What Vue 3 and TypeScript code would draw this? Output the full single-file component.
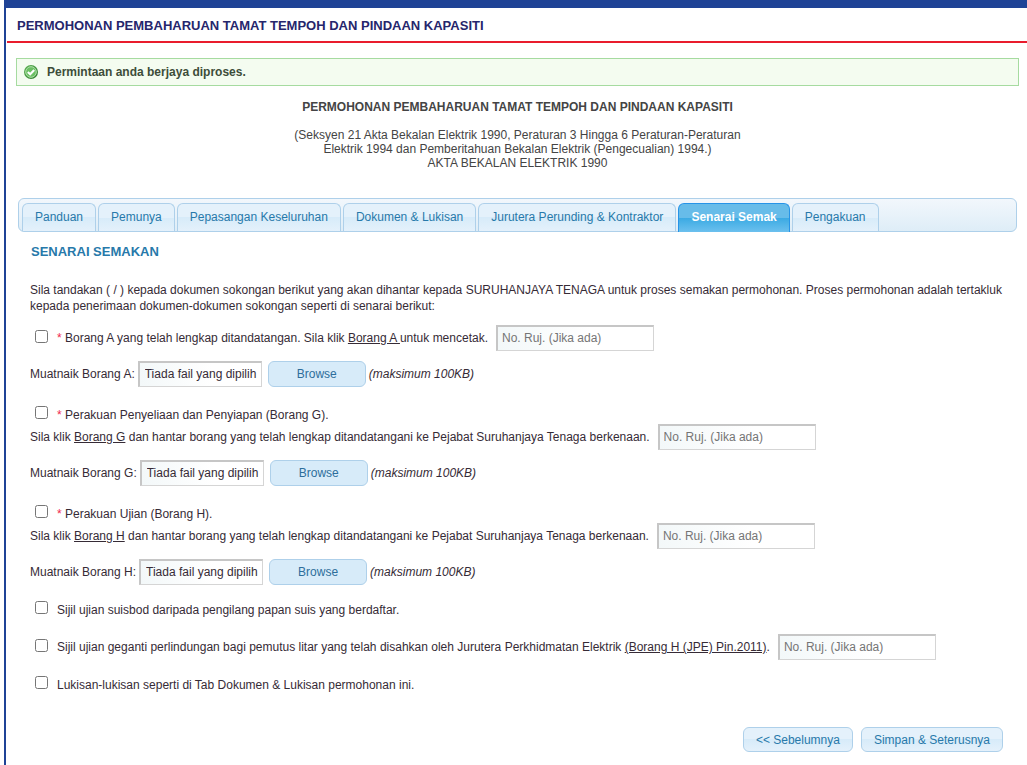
<script setup lang="ts">
import { ref } from 'vue'

const title = 'PERMOHONAN PEMBAHARUAN TAMAT TEMPOH DAN PINDAAN KAPASITI'

const tabs: string[] = [
  'Panduan',
  'Pemunya',
  'Pepasangan Keseluruhan',
  'Dokumen & Lukisan',
  'Jurutera Perunding & Kontraktor',
  'Senarai Semak',
  'Pengakuan',
]
const activeTab = ref('Senarai Semak')

interface FormUpload {
  code: string
  name: string
}
const uploads: FormUpload[] = [
  { code: 'G', name: 'Perakuan Penyeliaan dan Penyiapan (Borang G).' },
  { code: 'H', name: 'Perakuan Ujian (Borang H).' },
]
</script>

<template>
  <div class="page">
    <h1 class="page-title">{{ title }}</h1>

    <div class="alert" role="status">
      <svg class="alert-icon" viewBox="0 0 14 14" aria-hidden="true">
        <defs>
          <linearGradient id="okFill" x1="0" y1="0" x2="1" y2="1">
            <stop offset="0" stop-color="#5cb355" />
            <stop offset="1" stop-color="#2f7d2c" />
          </linearGradient>
        </defs>
        <circle cx="7" cy="7" r="7" fill="url(#okFill)" />
        <circle cx="7" cy="7" r="5.3" fill="#6cc064" stroke="#b4e2ad" stroke-width="1" />
        <path d="M3.8 7 6.2 9.3 10.2 5" fill="none" stroke="#fff" stroke-width="2.1" />
      </svg>
      <span>Permintaan anda berjaya diproses.</span>
    </div>

    <div class="intro">
      <h2>{{ title }}</h2>
      <p>
        (Seksyen 21 Akta Bekalan Elektrik 1990, Peraturan 3 Hingga 6 Peraturan-Peraturan<br />
        Elektrik 1994 dan Pemberitahuan Bekalan Elektrik (Pengecualian) 1994.)<br />
        AKTA BEKALAN ELEKTRIK 1990
      </p>
    </div>

    <div class="tabs" role="tablist">
      <button
        v-for="tab in tabs"
        :key="tab"
        type="button"
        role="tab"
        class="tab"
        :class="{ active: tab === activeTab }"
        :aria-selected="tab === activeTab"
        @click="activeTab = tab"
      >{{ tab }}</button>
    </div>

    <form class="panel" @submit.prevent>
      <h3>SENARAI SEMAKAN</h3>
      <p class="lead">
        Sila tandakan ( / ) kepada dokumen sokongan berikut yang akan dihantar kepada SURUHANJAYA TENAGA untuk proses semakan permohonan. Proses permohonan adalah tertakluk kepada penerimaan dokumen-dokumen sokongan seperti di senarai berikut:
      </p>

      <section class="item">
        <div class="row">
          <input id="check-A" type="checkbox" class="check" />
          <label for="check-A"><span class="required">*</span> Borang A yang telah lengkap ditandatangan. Sila klik <a href="#">Borang A </a>untuk mencetak.</label>
          <input type="text" class="field ref" placeholder="No. Ruj. (Jika ada)" aria-label="No. Ruj. Borang A" />
        </div>
        <div class="row upload">
          <label for="file-A">Muatnaik Borang A:</label>
          <input id="file-A" type="text" class="field file" value="Tiada fail yang dipilih" readonly />
          <button type="button" class="browse">Browse</button>
          <em>(maksimum 100KB)</em>
        </div>
      </section>

      <section v-for="u in uploads" :key="u.code" class="item">
        <div class="row short">
          <input :id="'check-' + u.code" type="checkbox" class="check" />
          <label :for="'check-' + u.code"><span class="required">*</span> {{ u.name }}</label>
        </div>
        <div class="row">
          <span>Sila klik <a href="#">Borang {{ u.code }}</a> dan hantar borang yang telah lengkap ditandatangani ke Pejabat Suruhanjaya Tenaga berkenaan.</span>
          <input type="text" class="field ref" placeholder="No. Ruj. (Jika ada)" :aria-label="'No. Ruj. Borang ' + u.code" />
        </div>
        <div class="row upload">
          <label :for="'file-' + u.code">Muatnaik Borang {{ u.code }}:</label>
          <input :id="'file-' + u.code" type="text" class="field file" value="Tiada fail yang dipilih" readonly />
          <button type="button" class="browse">Browse</button>
          <em>(maksimum 100KB)</em>
        </div>
      </section>

      <section class="simple">
        <div class="row">
          <input id="check-suisbod" type="checkbox" class="check" />
          <label for="check-suisbod">Sijil ujian suisbod daripada pengilang papan suis yang berdaftar.</label>
        </div>
        <div class="row">
          <input id="check-geganti" type="checkbox" class="check" />
          <label for="check-geganti">Sijil ujian geganti perlindungan bagi pemutus litar yang telah disahkan oleh Jurutera Perkhidmatan Elektrik <a href="#">(Borang H (JPE) Pin.2011)</a>.</label>
          <input type="text" class="field ref" placeholder="No. Ruj. (Jika ada)" aria-label="No. Ruj. Borang H (JPE)" />
        </div>
        <div class="row">
          <input id="check-lukisan" type="checkbox" class="check" />
          <label for="check-lukisan">Lukisan-lukisan seperti di Tab Dokumen &amp; Lukisan permohonan ini.</label>
        </div>
      </section>

      <div class="actions">
        <button type="button" class="btn">&lt;&lt; Sebelumnya</button>
        <button type="submit" class="btn">Simpan &amp; Seterusnya</button>
      </div>
    </form>
  </div>
</template>

<style>
body {
  background: #fff;
}
</style>

<style scoped>
.page {
  box-sizing: border-box;
  min-height: 100vh;
  margin-left: 4px;
  border-top: 8px solid #1f4396;
  border-left: 2px solid #1f4396;
  font-family: "Liberation Sans", Arial, sans-serif;
  font-size: 12px;
  line-height: 16px;
  color: #362b36;
}

h1,
h2,
h3,
p {
  margin: 0;
}

.page-title {
  margin-left: 1px;
  padding: 10px 10px 7px;
  border-bottom: 2px solid #e91c2d;
  font-size: 13px;
  line-height: 16px;
  color: #26266c;
}

.alert {
  display: flex;
  align-items: center;
  gap: 9px;
  margin: 15px 8px 0 10px;
  padding: 5px 7px;
  border: 1px solid #a6dba0;
  background: #f4fcf0;
  font-weight: bold;
  color: #3d4d3a;
}

.alert-icon {
  width: 14px;
  height: 14px;
}

.intro {
  margin: 14px 8px 0 10px;
  text-align: center;
  line-height: 14px;
  color: #444;
}

.intro h2 {
  margin-bottom: 14px;
  font-size: 12px;
}

.tabs {
  display: flex;
  gap: 2px;
  margin: 28px 10px 0 12px;
  padding: 4px 3px 0;
  border: 1px solid #aed0ea;
  border-radius: 6px;
  background: linear-gradient(#f2f7fc, #deedf7);
}

.tab {
  height: 28px;
  padding: 0 12px 2px;
  border: 1px solid #aed0ea;
  border-bottom: 0;
  border-radius: 6px 6px 0 0;
  background: linear-gradient(#e4f1fb 0 50%, #d7ebf9 50%, #e4f1fb);
  font: inherit;
  color: #2779aa;
  cursor: pointer;
}

.tab.active {
  height: 29px;
  margin-bottom: -1px;
  padding-bottom: 3px;
  border-color: #2694e8;
  background: linear-gradient(#67bce9 0 50%, #3baae3 50%, #6cc0ee);
  font-weight: bold;
  color: #fff;
}

.panel {
  padding: 12px 24px 12px 24px;
}

.panel h3 {
  padding-left: 1px;
  font-size: 13px;
  line-height: 16px;
  color: #2779aa;
}

.lead {
  margin: 22px 0 11px;
}

.item {
  margin-bottom: 18px;
}

.row {
  display: flex;
  align-items: center;
  min-height: 25px;
}

.row.short {
  min-height: 19px;
}

.upload {
  margin-top: 10px;
}

.check {
  width: 13px;
  height: 13px;
  margin: 0 9px 4px 5px;
}

.required {
  color: #f0284e;
}

a {
  color: inherit;
  text-decoration: underline;
  text-underline-offset: 1px;
}

a:last-child {
  white-space: pre;
}

.field {
  box-sizing: border-box;
  height: 26px;
  border: 1px solid #d5d5d5;
  border-top: 2px solid #c6c6c6;
  border-left: 2px solid #c6c6c6;
  background: linear-gradient(to right, #f3f8f9, #fff 60%);
  font: inherit;
  color: #362b36;
}

.ref {
  width: 158px;
  margin-left: 8px;
  padding: 0 4px 2px;
}

.ref::placeholder {
  color: #757575;
}

.file {
  width: 124px;
  margin: 0 6px 0 3px;
  padding: 0 0 2px 5px;
}

.browse {
  width: 98px;
  height: 26px;
  margin-right: 3px;
  padding: 0;
  border: 1px solid #aed0ea;
  border-radius: 6px;
  background: #d7ebf9;
  font: inherit;
  color: #2d6e9b;
  cursor: pointer;
}

.simple {
  display: flex;
  flex-direction: column;
  gap: 12px;
  margin-top: -6px;
}

.actions {
  display: flex;
  justify-content: flex-end;
  gap: 8px;
  margin-top: 30px;
}

.btn {
  height: 25px;
  padding: 0 12px;
  border: 1px solid #aed0ea;
  border-radius: 6px;
  background: linear-gradient(#e4f1fb 0 50%, #d7ebf9 50%, #e4f1fb);
  font: inherit;
  color: #2779aa;
  cursor: pointer;
}
</style>
